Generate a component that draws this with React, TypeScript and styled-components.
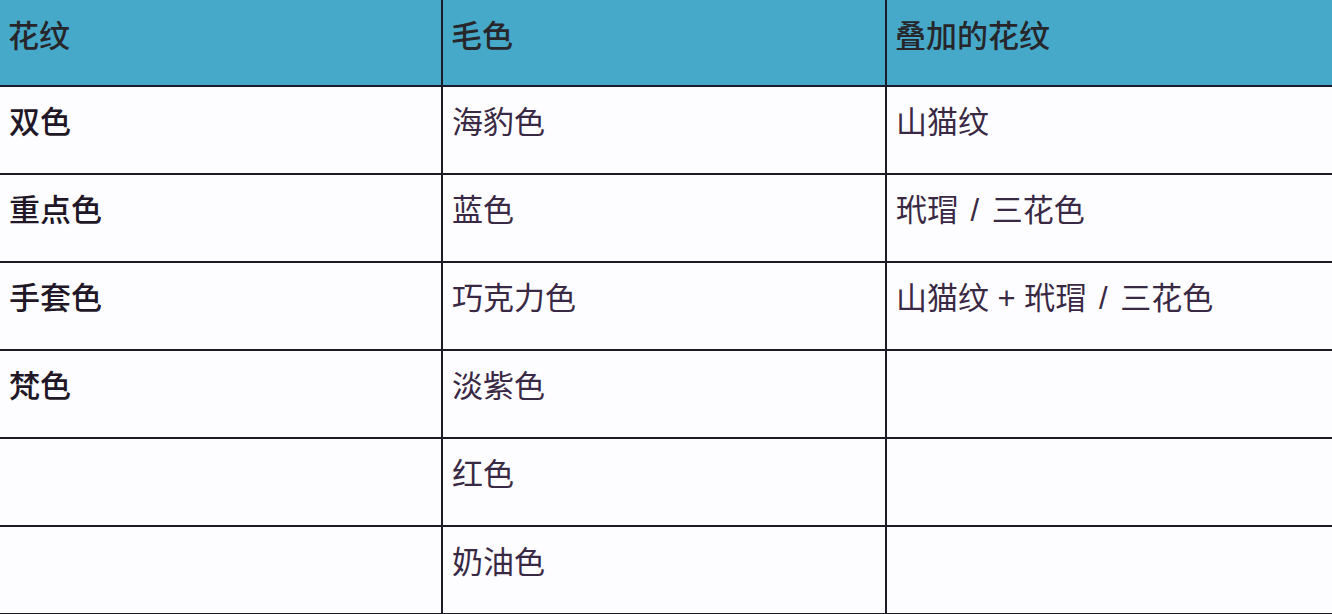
import React from "react"
import styled, { createGlobalStyle } from "styled-components"

const GlobalStyle = createGlobalStyle`
  html, body {
    margin: 0;
    padding: 0;
    background: #fdfdff;
  }
  body {
    font-family: "Liberation Sans", "Noto Sans CJK SC", sans-serif;
  }
`

const Grid = styled.div`
  display: grid;
  grid-template-columns: 443px 444px 1fr;
  width: 1332px;
  height: 614px;
  overflow: hidden;
  background: #fdfdff;
`

const Cell = styled.div<{ $head?: boolean; $last?: boolean; $bold?: boolean }>`
  box-sizing: border-box;
  height: ${(p) => (p.$head ? "87px" : "88px")};
  padding: ${(p) => (p.$head ? "17px 8px 0" : "16px 9px 0")};
  border-bottom: 2px solid #1d1b29;
  border-right: ${(p) => (p.$last ? "none" : "2px solid #1d1b29")};
  background: ${(p) => (p.$head ? "#47a9c9" : "transparent")};
  color: ${(p) => (p.$head ? "#26262b" : p.$bold ? "#221726" : "#3a2944")};
  font-size: 31px;
  line-height: 40px;
  font-weight: ${(p) => (p.$head || p.$bold ? 500 : 400)};
  white-space: pre;
`

// the slash sits a little looser than the plus in the source
const Sep = styled.span`
  margin: 0 4px;
`

const header = ["花纹", "毛色", "叠加的花纹"]

const withSlash = (text: string) => {
  const parts = text.split(" / ")
  if (parts.length < 2) return text
  return (
    <>
      {parts[0]}
      <Sep> / </Sep>
      {parts[1]}
    </>
  )
}

const rows: [string, string, string][] = [
  ["双色", "海豹色", "山猫纹"],
  ["重点色", "蓝色", "玳瑁 / 三花色"],
  ["手套色", "巧克力色", "山猫纹 + 玳瑁 / 三花色"],
  ["梵色", "淡紫色", ""],
  ["", "红色", ""],
  ["", "奶油色", ""],
]

export default function App() {
  return (
    <>
      <GlobalStyle />
      <Grid>
        {header.map((h, i) => (
          <Cell key={h} $head $last={i === 2}>
            {h}
          </Cell>
        ))}
        {rows.map((row, r) =>
          row.map((text, c) => (
            <Cell key={`${r}-${c}`} $bold={c === 0} $last={c === 2}>
              {withSlash(text)}
            </Cell>
          ))
        )}
      </Grid>
    </>
  )
}
